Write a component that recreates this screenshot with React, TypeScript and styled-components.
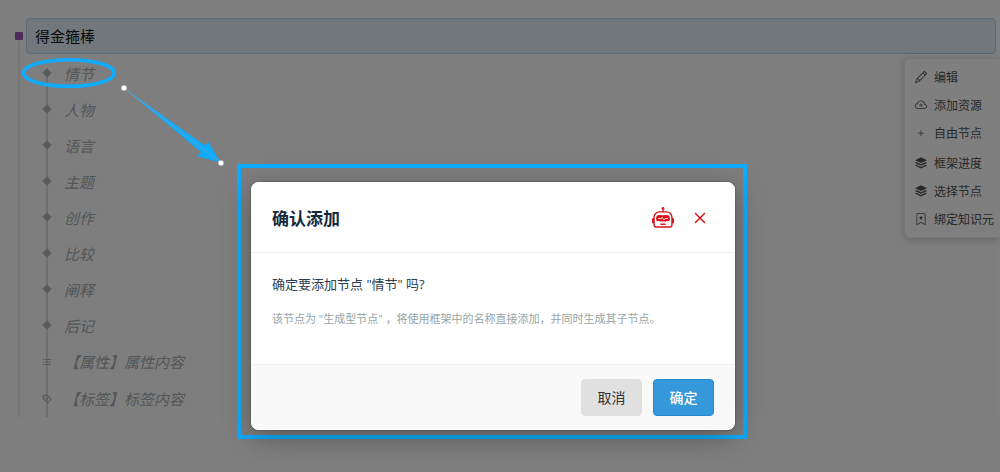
import React from 'react';
import styled, { createGlobalStyle, css } from 'styled-components';
import {
  BsBookmarkStar,
  BsCloudPlus,
  BsPencil,
  BsPlus,
  BsRobot,
  BsX,
} from 'react-icons/bs';

const ACCENT = '#0eacff';

const GlobalStyle = createGlobalStyle`
  *, *::before, *::after { box-sizing: border-box; }
  body {
    margin: 0;
    background: #fff;
    font-family: "Open Sans", "Noto Sans CJK SC", sans-serif;
  }
  button { font-family: inherit; cursor: pointer; }
`;

const Page = styled.main`
  position: relative;
  min-height: 100vh;
  overflow: hidden;
  padding: 18px 4px 0 5px;
`;

/* ---------- tree ---------- */

const Tree = styled.section`
  background: #fdfdfd;
`;

const RootRow = styled.div`
  display: flex;
  align-items: center;
  gap: 3px;
  padding-left: 10px;
  background: #fff;
`;

const RootMarker = styled.span`
  position: relative;
  width: 8px;
  height: 8px;
  border-radius: 1px;
  background: #9b59b6;

  &::after {
    content: "";
    position: absolute;
    top: 100%;
    left: 3px;
    width: 2px;
    height: 14px;
    background: #ececec;
  }
`;

const RootTitle = styled.h1`
  flex: 1;
  margin: 0;
  padding: 0 8px;
  border: 1px solid #b3d4e8;
  border-radius: 4px;
  background: #e3eff7;
  color: #111;
  font-size: 15px;
  font-weight: 400;
  line-height: 34px;
`;

const Branch = styled.div`
  margin-left: 13px;
  padding-left: 27px;
  border-left: 2px solid #ececec;
`;

const NodeList = styled.ul`
  position: relative;
  margin: 0;
  padding: 1px 0 0;
  list-style: none;

  &::before {
    content: "";
    position: absolute;
    top: 20px;
    bottom: 0;
    left: -1px;
    width: 2px;
    background: #d8dadc;
  }
`;

const NodeItem = styled.li<{ $tall?: boolean }>`
  position: relative;
  display: flex;
  align-items: center;
  gap: 12px;
  height: ${(p) => (p.$tall ? 37 : 36)}px;
  margin-left: -5px;
  color: #a6acb0;
  font-size: 15px;
  font-style: italic;
`;

const NodeIcon = styled.span`
  display: flex;
  justify-content: center;
  width: 10px;
  color: #b0b6bc;
  svg { flex: none; }
`;

/* ---------- side menu ---------- */

const SideMenu = styled.nav`
  position: absolute;
  top: 58px;
  right: 0;
  display: flex;
  flex-direction: column;
  gap: 2px;
  padding: 4px 0;
  border: 1px solid #eee;
  border-right: 0;
  border-radius: 6px 0 0 6px;
  background: #fff;
  box-shadow: 0 2px 8px rgba(0, 0, 0, 0.2);
`;

const MenuGroup = styled.div`
  display: flex;
  flex-direction: column;
`;

const MenuButton = styled.button`
  display: flex;
  align-items: center;
  gap: 7px;
  height: 28px;
  padding: 0 6px 0 10px;
  border: 0;
  background: none;
  color: #505050;
  font-size: 12px;
  white-space: nowrap;
`;

/* ---------- dialog ---------- */

const Overlay = styled.div`
  position: absolute;
  inset: 0;
  display: flex;
  align-items: flex-start;
  justify-content: center;
  padding: 164px 16px 0 0;
  background: rgba(0, 0, 0, 0.5);
`;

const Highlight = styled.div`
  width: 510px;
  max-width: 100%;
  padding: 14px 8px 5px 10px;
  border: 4px solid ${ACCENT};
  border-radius: 1px;
`;

const Dialog = styled.section`
  border: 1px solid #fff;
  border-radius: 7px;
  background: #fff;
  box-shadow: 0 8px 30px rgba(0, 0, 0, 0.3), 0 0 2px rgba(0, 0, 0, 0.4);
  overflow: hidden;
`;

const DialogHeader = styled.header`
  display: flex;
  align-items: center;
  gap: 14px;
  height: 70px;
  padding: 0 22px 0 20px;
  border-bottom: 1px solid #f1f1f1;
`;

const DialogTitle = styled.h2`
  flex: 1;
  margin: 0;
  color: #14293c;
  font-size: 17px;
  font-weight: 700;
`;

const IconButton = styled.button`
  display: flex;
  padding: 0;
  border: 0;
  background: none;
  color: #d9131a;
`;

const DialogBody = styled.div`
  padding: 20px 20px 35px;
`;

const Question = styled.p`
  margin: 0 0 14px;
  color: #2c3e50;
  font-size: 13px;
  line-height: 22px;
`;

const Hint = styled.p`
  margin: 0;
  color: #95a5a6;
  font-size: 11px;
  line-height: 20px;
`;

const DialogFooter = styled.footer`
  display: flex;
  justify-content: flex-end;
  gap: 11px;
  padding: 14px 20px 13px;
  border-top: 1px solid #f1f1f1;
  background: #f9f9f9;
`;

const ActionButton = styled.button<{ $primary?: boolean }>`
  width: 61px;
  height: 37px;
  padding: 0 0 2px;
  border: 1px solid #e0e0e0;
  border-radius: 4px;
  background: #e0e0e0;
  color: #333;
  font-size: 14px;
  ${(p) =>
    p.$primary &&
    css`
      border-color: #2389d2;
      background: #3498db;
      color: #fff;
      font-weight: 500;
    `}
`;

/* ---------- hand-drawn callouts ---------- */

const Callouts = styled.svg`
  position: absolute;
  top: 0;
  left: 0;
  pointer-events: none;
`;

const nodes = ['情节', '人物', '语言', '主题', '创作', '比较', '阐释', '后记'];

const DiamondIcon = () => (
  <svg width="10" height="10" viewBox="0 0 10 10" aria-hidden="true">
    <path d="M5 .3 9.7 5 5 9.7 .3 5z" fill="currentColor" />
  </svg>
);

const ListIcon = () => (
  <svg width="8" height="8" viewBox="0 0 8 8" aria-hidden="true">
    <path
      d="M0 1.5h1.4M2.2 1.5H8M0 4h1.4M2.2 4H8M0 6.5h8"
      stroke="currentColor"
      strokeWidth="1"
    />
  </svg>
);

const TagIcon = () => (
  <svg width="10" height="10" viewBox="0 0 10 10" aria-hidden="true">
    <path
      d="M1 2.6Q1 1.2 2.6 1.2L5.2 1.4 9 5.2 6 8.6 1.6 5z"
      fill="none"
      stroke="currentColor"
      strokeWidth="1.3"
      strokeLinejoin="round"
    />
    <path d="M3.4 3.2 6 5.8" stroke="currentColor" strokeWidth="1.3" />
  </svg>
);

const LayersIcon = () => (
  <svg width="12" height="12" viewBox="0 0 12 12" fill="currentColor" aria-hidden="true">
    <path d="M6 .3 12 3.2 6 6.1 0 3.2z" />
    <path d="M1.5 5.1 6 7.3 10.5 5.1 12 5.9 6 8.8 0 5.9z" />
    <path d="M1.5 7.8 6 10 10.5 7.8 12 8.6 6 11.5 0 8.6z" />
  </svg>
);

export default function App() {
  return (
    <>
      <GlobalStyle />
      <Page lang="zh-CN">
        <Tree>
          <RootRow>
            <RootMarker />
            <RootTitle>得金箍棒</RootTitle>
          </RootRow>
          <Branch>
            <NodeList>
              {nodes.map((name) => (
                <NodeItem key={name}>
                  <NodeIcon><DiamondIcon /></NodeIcon>
                  {name}
                </NodeItem>
              ))}
              <NodeItem $tall>
                <NodeIcon><ListIcon /></NodeIcon>
                【属性】属性内容
              </NodeItem>
              <NodeItem $tall>
                <NodeIcon><TagIcon /></NodeIcon>
                【标签】标签内容
              </NodeItem>
            </NodeList>
          </Branch>
        </Tree>

        <SideMenu aria-label="节点操作">
          <MenuGroup>
            <MenuButton><BsPencil size={12} />编辑</MenuButton>
            <MenuButton><BsCloudPlus size={12} />添加资源</MenuButton>
            <MenuButton><BsPlus size={12} />自由节点</MenuButton>
          </MenuGroup>
          <MenuGroup>
            <MenuButton><LayersIcon />框架进度</MenuButton>
            <MenuButton><LayersIcon />选择节点</MenuButton>
            <MenuButton><BsBookmarkStar size={12} />绑定知识元</MenuButton>
          </MenuGroup>
        </SideMenu>

        <Overlay>
          <Highlight>
            <Dialog role="dialog" aria-modal="true" aria-labelledby="dialog-title">
              <DialogHeader>
                <DialogTitle id="dialog-title">确认添加</DialogTitle>
                <IconButton aria-label="智能助手"><BsRobot size={22} /></IconButton>
                <IconButton aria-label="关闭"><BsX size={24} /></IconButton>
              </DialogHeader>
              <DialogBody>
                <Question>确定要添加节点 "情节" 吗?</Question>
                <Hint>该节点为 "生成型节点" ，将使用框架中的名称直接添加，并同时生成其子节点。</Hint>
              </DialogBody>
              <DialogFooter>
                <ActionButton>取消</ActionButton>
                <ActionButton $primary>确定</ActionButton>
              </DialogFooter>
            </Dialog>
          </Highlight>
        </Overlay>

        <Callouts width="230" height="172" viewBox="0 0 230 172" aria-hidden="true">
          <ellipse cx="69" cy="73" rx="45.3" ry="13.3" fill="none" stroke={ACCENT} strokeWidth="3.6" />
          <path d="M124 88 204.8 145.4 208.5 142 220.5 162.5 197.5 156.3 201 152z" fill={ACCENT} />
          <path d="M124 88 221 163" stroke="#6f9fc0" strokeWidth="0.8" />
          <circle cx="124" cy="88" r="2.8" fill="#fff" stroke="#9aa4aa" strokeWidth="0.6" />
          <circle cx="221" cy="163" r="2.8" fill="#fff" stroke="#9aa4aa" strokeWidth="0.6" />
        </Callouts>
      </Page>
    </>
  );
}
